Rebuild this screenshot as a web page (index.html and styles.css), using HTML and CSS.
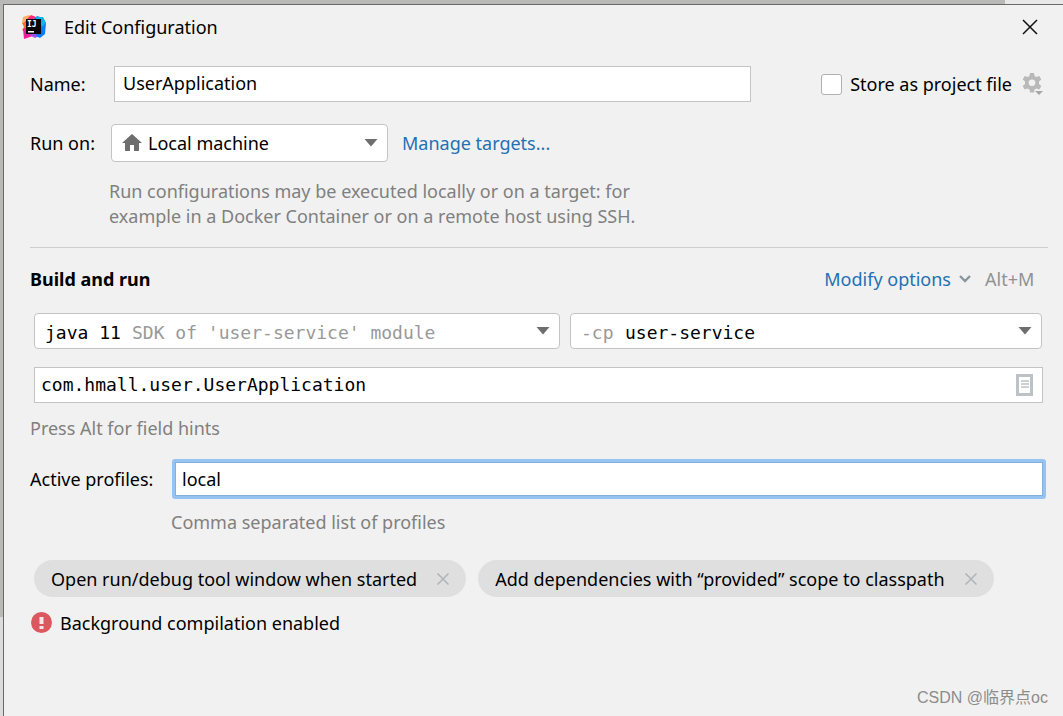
FILE: index.html
```html
<!DOCTYPE html>
<html lang="en">
<head>
<meta charset="utf-8">
<meta name="viewport" content="width=device-width, initial-scale=1">
<title>Edit Configuration</title>
<link rel="stylesheet" href="styles.css">
</head>
<body>
<div class="dialog" role="dialog" aria-labelledby="dialog-title">
  <header class="titlebar">
    <svg class="logo" viewBox="0 0 24 24" aria-hidden="true">
      <path d="M1 2L7 0L12 4L8 12L0 8Z" fill="#fdb35a"/>
      <path d="M6 3L9 0L14 2L13 6L5 14L2 8Z" fill="#fe2e75"/>
      <path d="M0 8L6 7L8 13L4 17L0 15L2 12Z" fill="#fc6d2c"/>
      <path d="M1 14L6 12L13 20L8 22L2 24Z" fill="#f21c9b"/>
      <path d="M8 19L18 18L17 21L13 23L9 21Z" fill="#a04fe0"/>
      <path d="M12 4L15 1L21 3L24 8L23 19L18 23L14 21L18 6Z" fill="#087cfa"/>
      <path d="M14 2L21 2L24 8L20 12L15 6Z" fill="#07b5f0"/>
      <rect x="4" y="4" width="15" height="15" fill="#0b0508"/>
      <text class="logo-text" x="5" y="12">IJ</text>
      <rect x="6" y="16" width="6" height="1.500" fill="#fff"/>
    </svg>
    <h1 class="title" id="dialog-title">Edit Configuration</h1>
    <button class="icon-button close" type="button" aria-label="Close">
      <svg width="16" height="16" viewBox="0 0 16 16" aria-hidden="true"><path d="M1 1L15 15M15 1L1 15" fill="none" stroke="#111" stroke-width="1.500"/></svg>
    </button>
  </header>

  <form class="content">
    <div class="row name-row">
      <label class="name-label" for="name">Name:</label>
      <input class="field name-field" id="name" type="text" value="UserApplication">
      <div class="store">
        <input class="checkbox" id="store" type="checkbox">
        <label for="store">Store as project file</label>
        <button class="icon-button gear" type="button" aria-label="Project file settings">
          <svg width="22" height="22" viewBox="0 0 22 22" aria-hidden="true">
            <path fill="#b9b9b9" fill-rule="evenodd" d="M8 0H12L12.500 3L14.500 4L17.300 3L19.300 6.500L17 8.500V11L19.300 13L17.300 16.500L14.500 15.500L12.500 16.500L12 19.500H8L7.500 16.500L5.500 15.500L2.700 16.500L0.700 13L3 11V8.500L0.700 6.500L2.700 3L5.500 4L7.500 3ZM10 6.500A3.300 3.300 0 1 0 10 13.100A3.300 3.300 0 1 0 10 6.500Z"/>
            <path fill="#a8a8a8" d="M13 18H21L17 22Z"/>
          </svg>
        </button>
      </div>
    </div>

    <div class="row run-row">
      <label class="run-label" for="target">Run on:</label>
      <div class="combo target">
        <select class="combo-select" id="target"><option>Local machine</option></select>
        <svg class="home" width="20" height="18" viewBox="0 0 20 18" aria-hidden="true"><path fill="#6e6e6e" d="M10 0L20 9H17V17H12V11H8V17H3V9H0Z"/></svg>
        <svg class="arrow" width="14" height="8" viewBox="0 0 14 8" aria-hidden="true"><path fill="#6e6e6e" d="M0.500 0H13.500L7 7.500Z"/></svg>
      </div>
      <a class="link" href="#targets">Manage targets...</a>
    </div>
    <p class="hint target-hint">Run configurations may be executed locally or on a target: for<br>example in a Docker Container or on a remote host using SSH.</p>

    <hr class="separator">

    <div class="row section-head">
      <h2 class="section-title">Build and run</h2>
      <a class="link modify" href="#options">Modify options
        <svg width="12" height="8" viewBox="0 0 12 8" aria-hidden="true"><path d="M1 1L6 6L11 1" fill="none" stroke="#8a959c" stroke-width="2.400"/></svg>
      </a>
      <span class="shortcut">Alt+M</span>
    </div>

    <div class="combos">
      <div class="combo mono">
        <select class="combo-select jre" id="jre" aria-label="JRE"><option>java 11</option></select>
        <label class="combo-note jre-note" for="jre">SDK of 'user-service' module</label>
        <svg class="arrow" width="14" height="8" viewBox="0 0 14 8" aria-hidden="true"><path fill="#6e6e6e" d="M0.500 0H13.500L7 7.500Z"/></svg>
      </div>
      <div class="combo mono">
        <select class="combo-select classpath" id="classpath"><option>user-service</option></select>
        <label class="combo-note" for="classpath">-cp</label>
        <svg class="arrow" width="14" height="8" viewBox="0 0 14 8" aria-hidden="true"><path fill="#6e6e6e" d="M0.500 0H13.500L7 7.500Z"/></svg>
      </div>
    </div>

    <div class="main-class mono">
      <input class="field main-field" type="text" aria-label="Main class" value="com.hmall.user.UserApplication">
      <button class="icon-button browse" type="button" aria-label="Browse classes">
        <svg width="17" height="22" viewBox="0 0 17 22" aria-hidden="true"><path d="M1.500 1.500H15.500V20.500H1.500Z" fill="#fff" stroke="#bcc2c5" stroke-width="3"/><path d="M5 7H13M5 10H13M5 13H13" stroke="#bcc2c5" stroke-width="1.300"/></svg>
      </button>
    </div>
    <p class="hint alt-hint">Press Alt for field hints</p>

    <div class="row profiles-row">
      <label class="profiles-label" for="profiles">Active profiles:</label>
      <input class="field profiles-field" id="profiles" type="text" value="local">
    </div>
    <p class="hint profiles-hint">Comma separated list of profiles</p>

    <div class="chips">
      <span class="chip">Open run/debug tool window when started
        <button class="icon-button" type="button" aria-label="Remove"><svg width="12" height="12" viewBox="0 0 12 12" aria-hidden="true"><path d="M0.500 0.500L11.500 11.500M11.500 0.500L0.500 11.500" stroke="#aeb4b7" stroke-width="1.500"/></svg></button>
      </span>
      <span class="chip">Add dependencies with “provided” scope to classpath
        <button class="icon-button" type="button" aria-label="Remove"><svg width="12" height="12" viewBox="0 0 12 12" aria-hidden="true"><path d="M0.500 0.500L11.500 11.500M11.500 0.500L0.500 11.500" stroke="#aeb4b7" stroke-width="1.500"/></svg></button>
      </span>
    </div>

    <p class="status">
      <svg width="22" height="22" viewBox="0 0 22 22" aria-hidden="true"><circle cx="11.500" cy="10.500" r="10.500" fill="#db5860"/><path d="M9.500 5H13.500V12H9.500ZM9.500 14H13.500V17H9.500Z" fill="#fff" fill-opacity="0.850"/></svg>
      Background compilation enabled
    </p>
  </form>
  <span class="watermark">CSDN @临界点oc</span>
</div>
</body>
</html>
```

FILE: styles.css
```css
* {
  box-sizing: border-box;
}

body {
  margin: 0;
  padding: 4px 0 0 3px;
  min-height: 100vh;
  display: flex;
  background:
    linear-gradient(#e8e8e8, #e8e8e8) right top / 58px 4px no-repeat,
    linear-gradient(#b9b9b8 617px, #dcdcdc 617px);
  color: #000;
  font: 18px/24px "Noto Sans", "Open Sans", "Noto Sans CJK SC", sans-serif;
}

h1, h2, p {
  margin: 0;
}

input, select, button {
  font: inherit;
  color: inherit;
}

.dialog {
  position: relative;
  flex: 1;
  min-width: 0;
  background: #f1f1f1;
  border: solid #6a6a6a;
  border-width: 1px 0 0 1px;
}

.titlebar {
  display: flex;
  align-items: center;
  height: 44px;
  padding: 0 25px 0 18px;
}

.logo {
  width: 24px;
  height: 24px;
}

.logo-text {
  font: bold 8px/8px "DejaVu Sans Mono", monospace;
  fill: #fff;
}

.title {
  margin-left: 18px;
  font-size: 18px;
  font-weight: 400;
}

.icon-button {
  display: inline-flex;
  padding: 0;
  border: 0;
  background: none;
}

.close {
  margin-left: auto;
}

.content {
  padding: 17px 15px 32px 26px;
}

.row {
  display: flex;
  align-items: center;
}

.field {
  min-width: 0;
  height: 36px;
  padding: 0 8px 2px;
  border: 1px solid #c4c4c4;
  border-radius: 0;
  background: #fff;
  outline: 0;
}

.name-label {
  width: 84px;
}

.name-field {
  flex: 1;
}

.store {
  display: flex;
  align-items: center;
  margin: 0 4px 0 70px;
}

.checkbox {
  appearance: none;
  width: 21px;
  height: 21px;
  margin: 0 8px 0 0;
  border: 1px solid #b0b0b0;
  border-radius: 3px;
  background: #fff;
}

.gear {
  margin-left: 10px;
}

.run-row {
  margin-top: 22px;
}

.run-label {
  width: 81px;
}

.combo {
  display: grid;
  align-items: center;
  min-width: 0;
}

.combo > * {
  grid-area: 1 / 1;
}

.combo-select {
  appearance: none;
  width: 100%;
  height: 36px;
  padding: 0 40px 0 10px;
  border: 1px solid #c4c4c4;
  border-radius: 4px;
  background: #fff;
}

.arrow {
  justify-self: end;
  margin-right: 10px;
  pointer-events: none;
}

.target {
  width: 277px;
  margin-right: 14px;
}

.target .combo-select {
  height: 38px;
  padding-left: 36px;
}

.home {
  margin-left: 11px;
  pointer-events: none;
}

.link {
  color: #2470b3;
  text-decoration: none;
}

.hint {
  color: #808080;
}

.target-hint {
  margin: 17px 0 18px 79px;
  line-height: 25px;
}

.separator {
  margin: 0;
  border: 0;
  border-top: 1px solid #cfcfcf;
}

.section-head {
  margin-top: 19px;
}

.section-title {
  flex: 1;
  font-size: 18px;
  font-weight: 700;
}

.modify {
  display: inline-flex;
  align-items: center;
  gap: 8px;
}

.shortcut {
  min-width: 56px;
  margin: 0 7px 0 14px;
  color: #919191;
}

.combos {
  display: grid;
  grid-template-columns: 526fr 472fr;
  gap: 10px;
  margin: 22px 6px 0 4px;
}

.mono {
  font-family: "DejaVu Sans Mono", "Liberation Mono", monospace;
}

.mono .combo-select,
.combo-note {
  padding-top: 3px;
}

.combo-note {
  margin-left: 11px;
  color: #999;
  pointer-events: none;
  white-space: nowrap;
}

.jre-note {
  margin-left: 98px;
}

.classpath {
  padding-left: 54px;
}

.main-class {
  display: grid;
  align-items: center;
  margin: 18px 5px 0 4px;
}

.main-class > * {
  grid-area: 1 / 1;
}

.main-field {
  width: 100%;
  padding: 0 40px 2px 6px;
}

.browse {
  justify-self: end;
  margin-right: 10px;
}

.alt-hint {
  margin-top: 13px;
}

.profiles-row {
  margin-top: 19px;
}

.profiles-label {
  width: 142px;
}

.profiles-field {
  flex: 1;
  height: 40px;
  margin-right: 2px;
  border: 3px solid #97c3f3;
  border-radius: 3px;
  box-shadow: inset 0 0 0 1px #87afda;
  padding: 0 7px;
}

.profiles-hint {
  margin: 11px 0 0 141px;
}

.chips {
  display: flex;
  flex-wrap: wrap;
  gap: 12px;
  margin: 26px 0 0 4px;
}

.chip {
  display: inline-flex;
  align-items: center;
  gap: 20px;
  height: 37px;
  padding: 0 17px;
  border-radius: 19px;
  background: #dfdfdf;
}

.status {
  display: flex;
  align-items: center;
  gap: 8px;
  margin-top: 14px;
}

.watermark {
  position: absolute;
  right: 15px;
  bottom: 6px;
  color: #8c8c8c;
  font: 16px/24px "Liberation Sans", "Noto Sans CJK SC", sans-serif;
}
```
